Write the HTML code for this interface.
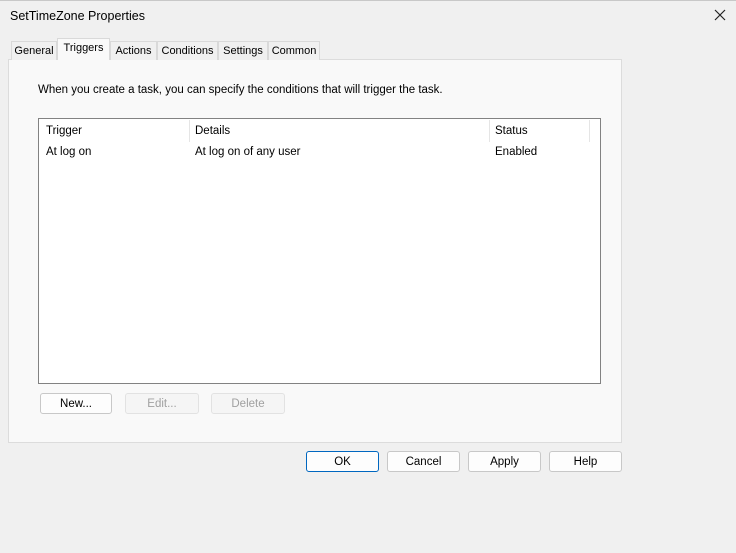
<!DOCTYPE html>
<html><head><style>
*{margin:0;padding:0;box-sizing:border-box}
body{width:736px;height:553px;background:#f0f0f0;font-family:"Liberation Sans",sans-serif;font-size:11.5px;color:#000;position:relative;overflow:hidden}
.a{position:absolute}
.tab{position:absolute;top:41px;height:19px;border:1px solid #d9d9d9;border-bottom:none;background:#f0f0f0;text-align:center;line-height:18px;font-size:11px}
.btn{position:absolute;height:21px;border:1px solid #c8c8c8;border-radius:3px;background:#fdfdfd;text-align:center;line-height:20px;font-size:11.5px}
.dis{color:#a0a0a0;background:#f5f5f5;border-color:#e2e2e2}
</style></head><body>
<div class="a" style="left:0;top:0;width:736px;height:1px;background:#c8c8c8"></div>
<div class="a" style="left:10px;top:9px;font-size:12.5px">SetTimeZone Properties</div>
<svg class="a" style="left:714px;top:9px" width="12" height="12"><path d="M1 1L11 11M11 1L1 11" stroke="#222" stroke-width="1.2"/></svg>
<div class="a" style="left:8px;top:59px;width:614px;height:384px;background:#f9f9f9;border:1px solid #dcdcdc"></div>
<div class="tab" style="left:11px;width:46px">General</div>
<div class="tab" style="left:110px;width:47px">Actions</div>
<div class="tab" style="left:157px;width:61px">Conditions</div>
<div class="tab" style="left:218px;width:50px">Settings</div>
<div class="tab" style="left:268px;width:52px">Common</div>
<div class="tab" style="left:57px;top:38px;height:22px;width:53px;background:#f9f9f9;line-height:19px">Triggers</div>
<div class="a" style="left:38px;top:84px">When you create a task, you can specify the conditions that will trigger the task.</div>
<div class="a" style="left:38px;top:118px;width:563px;height:266px;background:#fff;border:1px solid #828282"></div>
<div class="a" style="left:189px;top:120px;width:1px;height:22px;background:#e5e5e5"></div>
<div class="a" style="left:489px;top:120px;width:1px;height:22px;background:#e5e5e5"></div>
<div class="a" style="left:589px;top:120px;width:1px;height:22px;background:#e5e5e5"></div>
<div class="a" style="left:46px;top:125px">Trigger</div>
<div class="a" style="left:195px;top:125px">Details</div>
<div class="a" style="left:495px;top:125px">Status</div>
<div class="a" style="left:46px;top:146px">At log on</div>
<div class="a" style="left:195px;top:146px">At log on of any user</div>
<div class="a" style="left:495px;top:146px">Enabled</div>
<div class="btn" style="left:40px;top:393px;width:72px">New...</div>
<div class="btn dis" style="left:125px;top:393px;width:74px">Edit...</div>
<div class="btn dis" style="left:211px;top:393px;width:74px">Delete</div>
<div class="btn" style="left:306px;top:451px;width:73px;border-color:#0067c0">OK</div>
<div class="btn" style="left:387px;top:451px;width:73px">Cancel</div>
<div class="btn" style="left:468px;top:451px;width:73px">Apply</div>
<div class="btn" style="left:549px;top:451px;width:73px">Help</div>
</body></html>
